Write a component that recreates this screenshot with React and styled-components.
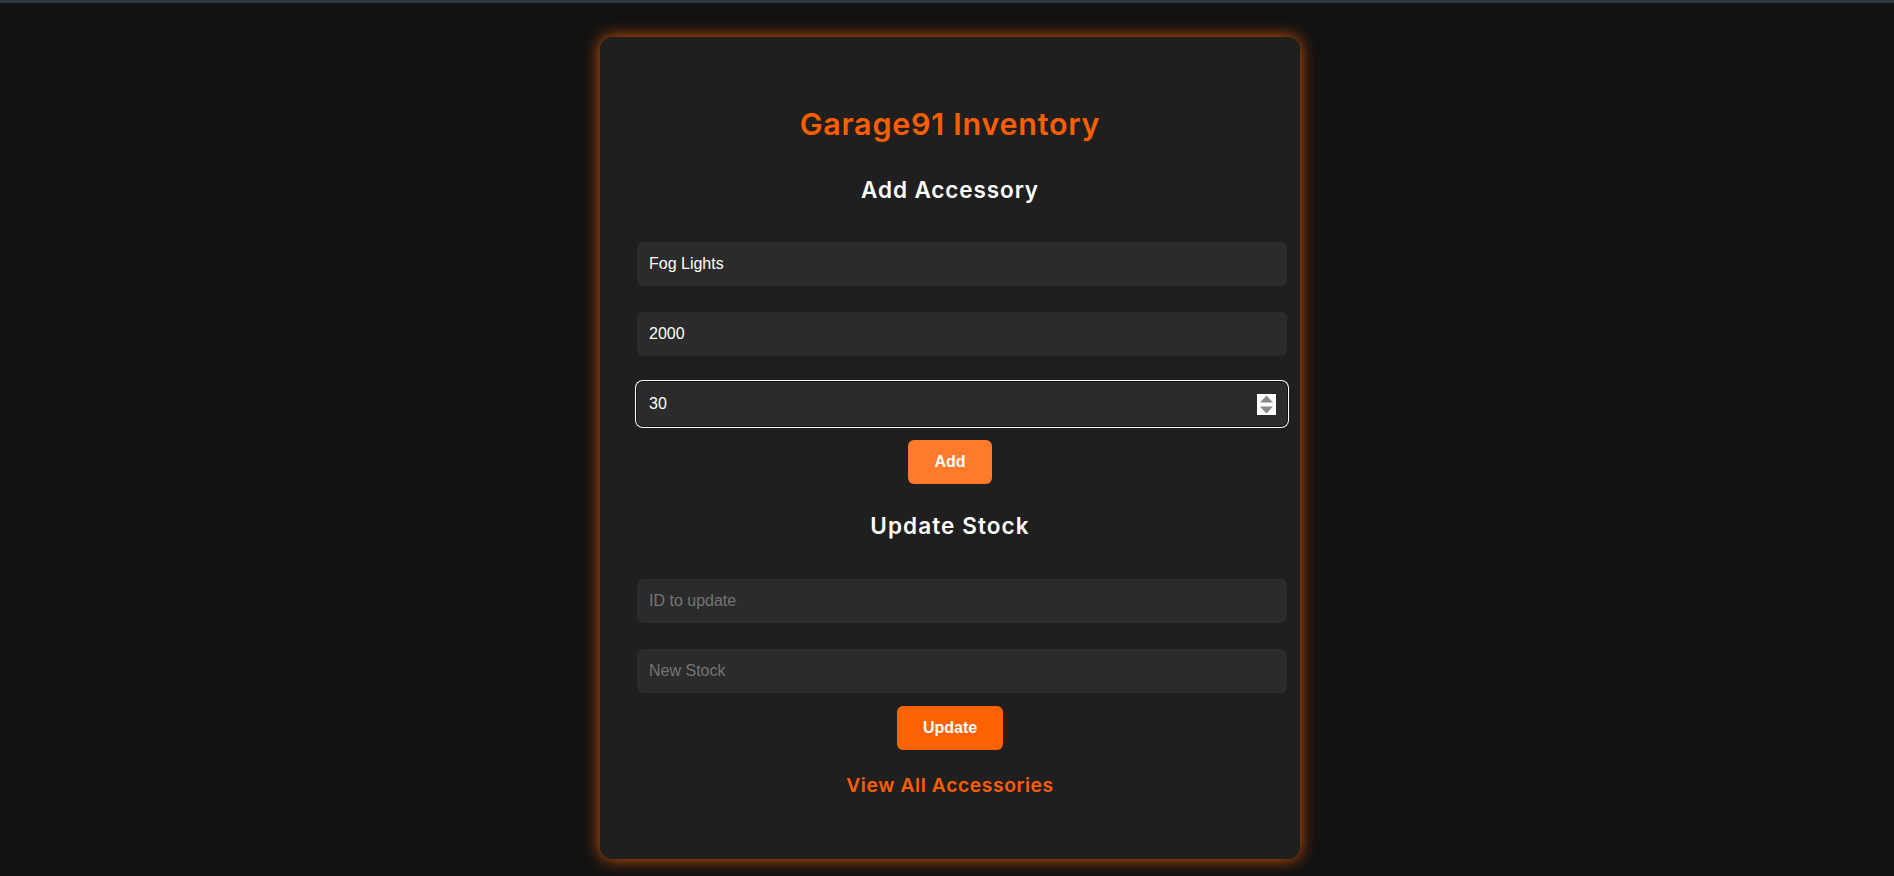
import React from 'react';
import styled, { createGlobalStyle } from 'styled-components';

const GlobalStyle = createGlobalStyle`
  html, body {
    margin: 0;
    padding: 0;
    background: #121212;
  }
  body {
    font-family: Inter, "Noto Sans", sans-serif;
  }
`;

const TopLine = styled.div`
  height: 3px;
  background: #2b3b3f;
`;

const Page = styled.main`
  min-height: 873px;
  box-sizing: border-box;
  display: flex;
  justify-content: center;
  align-items: flex-start;
  padding: 34px 0 0 6px;
`;

const Card = styled.section`
  width: 700px;
  box-sizing: border-box;
  padding: 67px 37px 61px;
  background: #1f1f1f;
  border-radius: 12px;
  box-shadow: 0 0 16px rgba(255, 98, 0, 0.85);
`;

const Title = styled.h1`
  margin: 0;
  font-size: 30.5px;
  line-height: 40px;
  font-weight: 600;
  color: #ff5e00;
  text-align: center;
  letter-spacing: 0.75px;
`;

const SectionTitle = styled.h2`
  margin: ${(p) => p.$top}px 0 0;
  font-size: 22.5px;
  line-height: 30px;
  font-weight: 600;
  color: #ffffff;
  text-align: center;
  letter-spacing: ${(p) => p.$spacing}px;
`;

const FieldShell = styled.div`
  position: relative;
  width: calc(100% + 24px);
  margin-top: ${(p) => p.$top}px;
`;

const Field = styled.input`
  display: block;
  box-sizing: border-box;
  width: 100%;
  height: 44px;
  margin: 0;
  padding: 0 12px;
  border: none;
  border-radius: 6px;
  background: #2b2b2b;
  color: #ffffff;
  font-family: "Liberation Sans", Arial, sans-serif;
  font-size: 16px;
  outline: none;
  box-shadow: ${(p) => (p.$focused ? '0 0 0 1px #101010, 0 0 0 2px #ffffff' : 'none')};
  -moz-appearance: textfield;

  &::placeholder {
    color: #757575;
    opacity: 1;
  }

  &::-webkit-inner-spin-button,
  &::-webkit-outer-spin-button {
    -webkit-appearance: none;
    margin: 0;
  }
`;

const Spinner = styled.svg`
  position: absolute;
  top: 12px;
  right: 11px;
  width: 19px;
  height: 21px;
  pointer-events: none;
`;

const ActionButton = styled.button`
  display: block;
  margin: ${(p) => p.$top}px auto 0;
  padding: 12px 26px;
  border: none;
  border-radius: 6px;
  background: ${(p) => p.$bg};
  color: #ffffff;
  font-family: "Liberation Sans", Arial, sans-serif;
  font-size: 16px;
  line-height: 20px;
  font-weight: 700;
  cursor: pointer;
`;

const ViewLink = styled.a`
  display: block;
  margin-top: 22px;
  font-size: 19.3px;
  line-height: 26px;
  font-weight: 600;
  color: #ff5e00;
  text-align: center;
  text-decoration: none;
  letter-spacing: 0.6px;
`;

function SpinIcon() {
  return (
    <Spinner viewBox="0 0 19 21" aria-hidden="true">
      <rect x="0" y="0" width="19" height="21" fill="#ffffff" />
      <polygon points="3,8.5 16,8.5 9.5,1.5" fill="#8a8a8a" />
      <polygon points="3,12.5 16,12.5 9.5,19.5" fill="#8a8a8a" />
    </Spinner>
  );
}

export default function App() {
  return (
    <>
      <GlobalStyle />
      <TopLine />
      <Page>
        <Card>
          <Title>Garage91 Inventory</Title>
          <SectionTitle $top={31} $spacing={0.9}>Add Accessory</SectionTitle>
          <FieldShell $top={37}>
            <Field type="text" placeholder="Name" defaultValue="Fog Lights" />
          </FieldShell>
          <FieldShell $top={26}>
            <Field type="number" placeholder="Price" defaultValue="2000" />
          </FieldShell>
          <FieldShell $top={26}>
            <Field type="number" placeholder="Stock" defaultValue="30" $focused />
            <SpinIcon />
          </FieldShell>
          <ActionButton $top={14} $bg="#ff7b2b">Add</ActionButton>
          <SectionTitle $top={27} $spacing={1.1}>Update Stock</SectionTitle>
          <FieldShell $top={38}>
            <Field type="number" placeholder="ID to update" />
          </FieldShell>
          <FieldShell $top={26}>
            <Field type="number" placeholder="New Stock" />
          </FieldShell>
          <ActionButton $top={13} $bg="#ff6200">Update</ActionButton>
          <ViewLink href="#">View All Accessories</ViewLink>
        </Card>
      </Page>
    </>
  );
}
